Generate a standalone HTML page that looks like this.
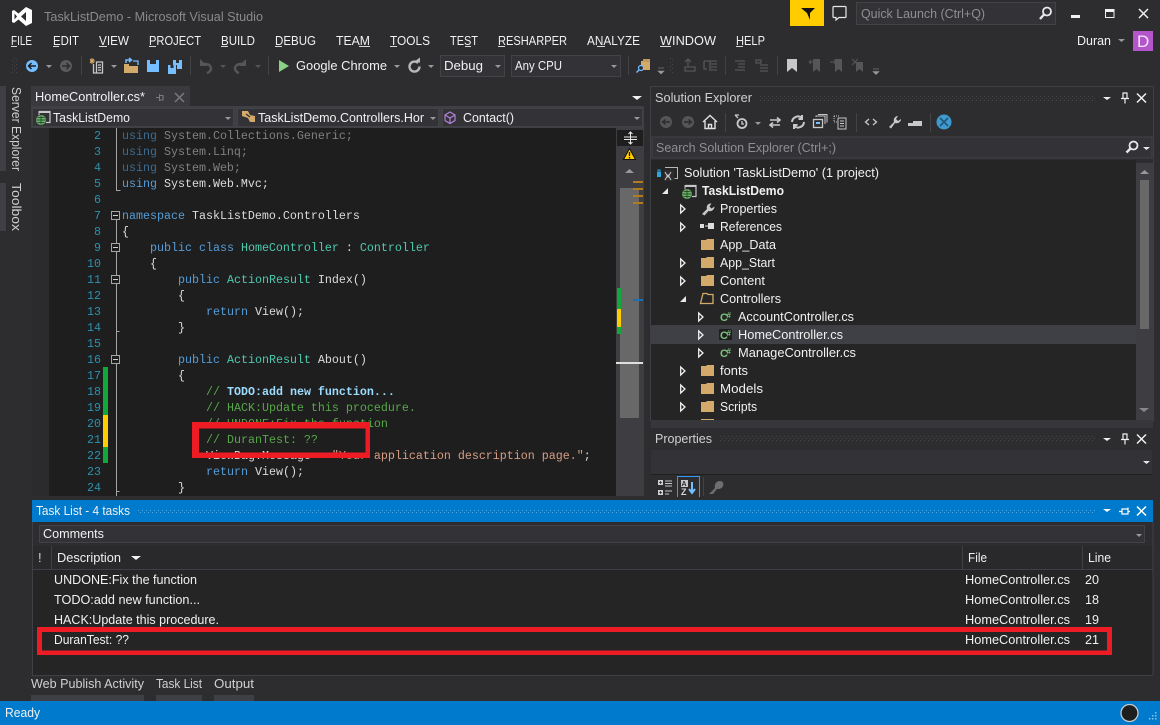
<!DOCTYPE html>
<html><head><meta charset="utf-8"><title>TaskListDemo - Microsoft Visual Studio</title>
<style>
html,body{margin:0;padding:0;background:#2d2d30;width:1160px;height:725px;overflow:hidden}
svg{display:block;position:absolute;left:0;top:0}
text{font-family:"Liberation Sans",sans-serif;font-size:13px;fill:#f1f1f1;white-space:pre}
.c text,text.c{font-family:"Liberation Mono",monospace;font-size:11.67px}
.n{fill:#2b91af;text-anchor:end}
.k{fill:#569cd6}.t{fill:#4ec9b0}.g{fill:#57a64a}.d{fill:#dcdcdc}.s{fill:#d69d85}
.dk{fill:#3d6b8f}.dd{fill:#808080}
.tri{fill:#999}
.ic{fill:none;stroke:#c8c8c8;stroke-width:1.3}
.dim{fill:none;stroke:#565656;stroke-width:1.3}
.cs{font-size:11px;font-weight:bold;fill:#7cc47c}
.cs2{font-size:8px;font-weight:bold;fill:#7cc47c}
</style></head><body>
<svg width="1160" height="725" viewBox="0 0 1160 725" xmlns="http://www.w3.org/2000/svg">
<defs>
<path id="fold" d="M0 2h5l1-1h7v11H0z" fill="#d4aa6a"/>
<path id="exp" d="M0.700 1L5 5L0.700 9z" fill="none" stroke="#f0f0f0" stroke-width="1.300"/>
<g id="ctl"><path d="M1103 -1h8l-4 3z" fill="#f1f1f1"/><path d="M1122.500 -5h5M1123 -5v5M1127 -5v5M1121 0.500h8M1125 0.500v5" fill="none" stroke="#f1f1f1" stroke-width="1.200"/><path d="M1137 -4.500l9 9M1146 -4.500l-9 9" stroke="#f1f1f1" stroke-width="1.500"/></g>
<pattern id="grip" width="4" height="4" patternUnits="userSpaceOnUse"><rect width="1" height="1" fill="#46464a"/><rect x="2" y="2" width="1" height="1" fill="#46464a"/></pattern>
<pattern id="gripb" width="4" height="4" patternUnits="userSpaceOnUse"><rect width="1" height="1" fill="#59a8e0"/><rect x="2" y="2" width="1" height="1" fill="#59a8e0"/></pattern>
<g id="proj"><path d="M3 0.500h11v11H10" fill="none" stroke="#c8c8c8" stroke-width="1.200"/><rect x="3" y="0" width="11" height="2" fill="#c8c8c8"/><path d="M3 0v4" stroke="#c8c8c8"/><circle cx="5" cy="9" r="5" fill="#6ab26a"/><path d="M0.500 9h9M5 4.500v9M1.500 6.500h7M1.500 11.500h7" stroke="#1e3a1e" stroke-width=".7"/></g>
</defs>

<rect width="1160" height="725" fill="#2d2d30"/>

<!-- Title bar -->
<path fill-rule="evenodd" d="M26 7L32 10V23L26 26L18.500 19.500L14 23L12 22V11L14 10L18.500 13.500ZM26 12L21 16.500L26 21ZM14.500 13.500V19.500L17 16.500Z" fill="#fff"/>
<text x="44" y="21" textLength="219" lengthAdjust="spacingAndGlyphs" style="fill:#8a8a8d">TaskListDemo - Microsoft Visual Studio</text>
<rect x="790" y="0" width="34" height="26" fill="#ffcc00"/>
<path d="M801 8h14l-5 5v7l-3-7z" fill="#111"/>
<path d="M833 7.500q0-1 1-1h11q1 0 1 1v9q0 1-1 1h-6l-3 2.500v-2.500h-2q-1 0-1-1z" fill="none" stroke="#e8e8e8" stroke-width="1.200"/>
<rect x="856.500" y="2.500" width="199" height="22" fill="#333337" stroke="#434346"/>
<text x="861" y="18" textLength="124" lengthAdjust="spacingAndGlyphs" style="fill:#8f8f92">Quick Launch (Ctrl+Q)</text>
<circle cx="1047" cy="11.500" r="4" fill="none" stroke="#e8e8e8" stroke-width="1.800"/><path d="M1044 14.500l-4 4.500" stroke="#e8e8e8" stroke-width="2.400"/>
<rect x="1071" y="15" width="9" height="3" fill="#f1f1f1"/>
<rect x="1105.500" y="9.500" width="8.500" height="8" fill="none" stroke="#f1f1f1"/><rect x="1105" y="9" width="9.500" height="3" fill="#f1f1f1"/>
<path d="M1139 9l9 9M1148 9l-9 9" stroke="#f1f1f1" stroke-width="1.500"/>

<!-- Menu -->
<g>
<text x="11" y="45" textLength="21" lengthAdjust="spacingAndGlyphs">FILE</text>
<text x="53" y="45" textLength="26" lengthAdjust="spacingAndGlyphs">EDIT</text>
<text x="99" y="45" textLength="30" lengthAdjust="spacingAndGlyphs">VIEW</text>
<text x="149" y="45" textLength="52" lengthAdjust="spacingAndGlyphs">PROJECT</text>
<text x="221" y="45" textLength="34" lengthAdjust="spacingAndGlyphs">BUILD</text>
<text x="275" y="45" textLength="41" lengthAdjust="spacingAndGlyphs">DEBUG</text>
<text x="336" y="45" textLength="34" lengthAdjust="spacingAndGlyphs">TEAM</text>
<text x="390" y="45" textLength="40" lengthAdjust="spacingAndGlyphs">TOOLS</text>
<text x="450" y="45" textLength="28" lengthAdjust="spacingAndGlyphs">TEST</text>
<text x="498" y="45" textLength="69" lengthAdjust="spacingAndGlyphs">RESHARPER</text>
<text x="587" y="45" textLength="53" lengthAdjust="spacingAndGlyphs">ANALYZE</text>
<text x="660" y="45" textLength="56" lengthAdjust="spacingAndGlyphs">WINDOW</text>
<text x="736" y="45" textLength="29" lengthAdjust="spacingAndGlyphs">HELP</text>
<path d="M11 46.500h6M53 46.500h6M99 46.500h8M149 46.500h7M221 46.500h7M275 46.500h7M359 46.500h11M390 46.500h7M465 46.500h6M498 46.500h7M597 46.500h8M660 46.500h11M736 46.500h7" stroke="#d8d8d8" stroke-width="1"/>
</g>
<text x="1077" y="45" textLength="34" lengthAdjust="spacingAndGlyphs">Duran</text>
<path d="M1118 39h7l-3.500 3z" class="tri"/>
<rect x="1133" y="31" width="20" height="20" fill="#b455cc"/>
<text x="1137" y="47" style="font-size:17px;fill:#f5e6f8">D</text>

<!-- Toolbar -->
<rect x="12" y="57" width="5" height="17" fill="url(#grip)"/>
<circle cx="32" cy="66" r="6" fill="#75beff"/><path d="M36 66h-7M31.500 63l-3 3 3 3" stroke="#1e1e1e" stroke-width="1.500" fill="none"/>
<path d="M46 65h6l-3 3z" class="tri"/>
<circle cx="66" cy="66" r="6" fill="#5a5a5a"/><path d="M62 66h7M66.500 63l3 3-3 3" stroke="#2d2d30" stroke-width="1.500" fill="none"/>
<path d="M81.500 56v19" stroke="#434346"/>
<path d="M93.500 64v9h5M96.500 62h6v11h-6zM98 65h3M98 67.500h3M98 70h3" class="ic" stroke-width="1.100"/>
<path d="M90 59l4 4M94 59l-4 4M92 58v6M90 61h5" stroke="#d4aa6a" stroke-width="1"/>
<path d="M111 65h6l-3 3z" class="tri"/>
<path d="M124 66h14v7h-14z" fill="#d4aa6a"/><path d="M124 64h5v3h-5z" fill="#d4aa6a"/>
<path d="M126 63v-3h5M129 58l2.500 2-2.500 2" stroke="#75beff" stroke-width="1.500" fill="none"/><path d="M133 61h5v4" fill="none" stroke="#75beff" stroke-width="1.300"/>
<path d="M147 60h12v12h-12z" fill="#75beff"/><rect x="150" y="60" width="6" height="4" fill="#2d2d30"/>
<path d="M168 65h8v9h-8z" fill="#75beff"/><path d="M173 60h9v9h-5v-4h-4z" fill="#75beff"/><rect x="176" y="60" width="3" height="3" fill="#2d2d30"/><rect x="170.500" y="65" width="3" height="3" fill="#2d2d30"/>
<path d="M190.500 56v19" stroke="#434346"/>
<path d="M201 64h4c5 0 6 3 6 4.500 0 2-2 4-4 4.500" style="fill:none;stroke:#565656;stroke-width:2.500"/><path d="M200 59v7h7z" fill="#565656"/>
<path d="M220 65h6l-3 3z" fill="#555"/>
<path d="M245 64h-4c-5 0-6 3-6 4.500 0 2 2 4 4 4.500" style="fill:none;stroke:#565656;stroke-width:2.500"/><path d="M246 59v7h-7z" fill="#565656"/>
<path d="M255 65h6l-3 3z" fill="#555"/>
<path d="M268.500 56v19" stroke="#434346"/>
<path d="M279 60l10 6-10 6z" fill="#89d185"/>
<text x="296" y="70" textLength="91" lengthAdjust="spacingAndGlyphs">Google Chrome</text>
<path d="M394 65h6l-3 3z" class="tri"/>
<path d="M418 63a5 5 0 1 0 1.500 3.500" fill="none" stroke="#b8b8b8" stroke-width="2.400"/><path d="M413 62.500h7v-5z" fill="#b8b8b8"/>
<path d="M428 65h6l-3 3z" class="tri"/>
<rect x="440.500" y="55.500" width="64" height="21" fill="#333337" stroke="#434346"/>
<text x="444" y="70" textLength="39" lengthAdjust="spacingAndGlyphs">Debug</text>
<path d="M495 65h6l-3 3z" class="tri"/>
<rect x="511.500" y="55.500" width="109" height="21" fill="#333337" stroke="#434346"/>
<text x="515" y="70" textLength="47" lengthAdjust="spacingAndGlyphs">Any CPU</text>
<path d="M611 65h6l-3 3z" class="tri"/>
<path d="M628.500 56v19" stroke="#434346"/>
<path d="M641 61h9v9h-9z" fill="#d4aa6a"/><path d="M643 59h7v3h-7z" fill="#c09a5f"/>
<circle cx="641" cy="68" r="2.500" fill="#2d2d30" stroke="#75beff" stroke-width="1.200"/><path d="M639 70l-2.500 2.500" stroke="#75beff" stroke-width="1.400"/>
<path d="M658 68h6M658 71h6l-3 3z" fill="#999" stroke="#999" stroke-width=".6"/>
<rect x="669" y="57" width="5" height="17" fill="url(#grip)"/>
<g class="dim"><path d="M685 67v4h10v-4zM685 62l3-3 3 3M688 60v6"/><path d="M704 61h6v10M704 61v8h3M710 61h7M711 64h6M711 67h6M711 70h6"/><path d="M735 61h10M738 64h7M738 67h7M735 70h10M756 60h5v3h-5zM760 65h8M760 68h8M760 71h8"/></g>
<path d="M725.500 56v19M777.500 56v19" stroke="#434346"/>
<path d="M787 59h10v13l-5-4-5 4z" fill="#c8c8c8"/>
<path d="M813 59h7v13l-3.500-3-3.500 3z" fill="#565656"/><path d="M809 62h6M809 62l2-2M809 62l2 2" stroke="#565656" fill="none"/>
<path d="M835 59h7v13l-3.500-3-3.500 3z" fill="#565656"/><path d="M830 62h6M836 62l-2-2M836 62l-2 2" stroke="#565656" fill="none"/>
<path d="M856 62h7v10l-3.500-3-3.500 3z" fill="#565656"/><path d="M852 59l6 6M858 59l-6 6" stroke="#565656"/>
<path d="M873 69h6M873 71.500h6l-3 3z" fill="#999" stroke="#999" stroke-width=".6"/>

<!-- Left tabs -->
<rect x="0" y="86" width="6" height="85" fill="#3f3f46"/>
<rect x="0" y="183" width="6" height="48" fill="#3f3f46"/>
<text transform="translate(12,87) rotate(90)" textLength="84" lengthAdjust="spacingAndGlyphs" style="fill:#d0d0d0">Server Explorer</text>
<text transform="translate(12,183) rotate(90)" textLength="48" lengthAdjust="spacingAndGlyphs" style="fill:#d0d0d0">Toolbox</text>

<!-- Doc tab -->
<rect x="31" y="86" width="159" height="20" fill="#3a3a3e"/>
<rect x="31" y="106" width="613" height="22" fill="#3f3f46"/>
<text x="35" y="101" textLength="110" lengthAdjust="spacingAndGlyphs">HomeController.cs*</text>
<path d="M156 97.500h3M159.500 95.500h3.500v4.500h-3.500zM163 97.500h1M159.500 94v7" stroke="#7a7a7a" fill="none" stroke-width="1"/>
<path d="M175 93l9 9M184 93l-9 9" stroke="#7a7a7a" stroke-width="1.500"/>
<path d="M632 96h10l-5 4z" fill="#f1f1f1"/>

<rect x="32.500" y="108.500" width="201" height="18" fill="#333337" stroke="#434346"/>
<rect x="237.500" y="108.500" width="201" height="18" fill="#333337" stroke="#434346"/>
<rect x="442.500" y="108.500" width="200" height="18" fill="#333337" stroke="#434346"/>
<use href="#proj" x="36" y="111"/>
<text x="53" y="122" textLength="77" lengthAdjust="spacingAndGlyphs">TaskListDemo</text>
<path d="M225 117h6l-3 3z" class="tri"/>
<path d="M242 111l6 0 2 4 5 1 0 6-5 0-2-4-6-2z" fill="#d4aa6a"/><path d="M246 114l4 3" stroke="#2d2d30" stroke-width="1.200"/>
<text x="258" y="122" textLength="166" lengthAdjust="spacingAndGlyphs">TaskListDemo.Controllers.Hor</text>
<path d="M430 117h6l-3 3z" class="tri"/>
<path d="M450 112l5 3v5.500l-5 3-5-3V115zM445 115l5 3 5-3M450 118v5.500" fill="none" stroke="#b180d7" stroke-width="1.200"/>
<text x="463" y="122" textLength="51" lengthAdjust="spacingAndGlyphs">Contact()</text>
<path d="M634 117h6l-3 3z" class="tri"/>

<!-- Editor -->
<rect x="32" y="128" width="584" height="368" fill="#1e1e1e"/>
<rect x="32" y="128" width="17" height="368" fill="#2b2b2d"/>
<g class="c">
<text class="n" x="101" y="139">2</text><text class="n" x="101" y="155">3</text><text class="n" x="101" y="171">4</text><text class="n" x="101" y="187">5</text><text class="n" x="101" y="203">6</text><text class="n" x="101" y="219">7</text><text class="n" x="101" y="235">8</text><text class="n" x="101" y="251">9</text><text class="n" x="101" y="267">10</text><text class="n" x="101" y="283">11</text><text class="n" x="101" y="299">12</text><text class="n" x="101" y="315">13</text><text class="n" x="101" y="331">14</text><text class="n" x="101" y="347">15</text><text class="n" x="101" y="363">16</text><text class="n" x="101" y="379">17</text><text class="n" x="101" y="395">18</text><text class="n" x="101" y="411">19</text><text class="n" x="101" y="427">20</text><text class="n" x="101" y="443">21</text><text class="n" x="101" y="459">22</text><text class="n" x="101" y="475">23</text><text class="n" x="101" y="491">24</text>
<text x="122" y="139"><tspan class="dk">using</tspan><tspan class="dd"> System.Collections.Generic;</tspan></text>
<text x="122" y="155"><tspan class="dk">using</tspan><tspan class="dd"> System.Linq;</tspan></text>
<text x="122" y="171"><tspan class="dk">using</tspan><tspan class="dd"> System.Web;</tspan></text>
<text x="122" y="187"><tspan class="k">using</tspan><tspan class="d"> System.Web.Mvc;</tspan></text>
<text x="122" y="219"><tspan class="k">namespace</tspan><tspan class="d"> TaskListDemo.Controllers</tspan></text>
<text x="122" y="235" class="d c">{</text>
<text x="150" y="251"><tspan class="k">public class</tspan><tspan class="d"> </tspan><tspan class="t">HomeController</tspan><tspan class="d"> : </tspan><tspan class="t">Controller</tspan></text>
<text x="150" y="267" class="d c">{</text>
<text x="178" y="283"><tspan class="k">public</tspan><tspan class="d"> </tspan><tspan class="t">ActionResult</tspan><tspan class="d"> Index()</tspan></text>
<text x="178" y="299" class="d c">{</text>
<text x="206" y="315"><tspan class="k">return</tspan><tspan class="d"> View();</tspan></text>
<text x="178" y="331" class="d c">}</text>
<text x="178" y="363"><tspan class="k">public</tspan><tspan class="d"> </tspan><tspan class="t">ActionResult</tspan><tspan class="d"> About()</tspan></text>
<text x="178" y="379" class="d c">{</text>
<text x="206" y="395"><tspan class="g">// </tspan><tspan style="fill:#9cdcfe;font-weight:bold">TODO:add new function...</tspan></text>
<text x="206" y="411" class="g c">// HACK:Update this procedure.</text>
<text x="206" y="427" class="g c">// UNDONE:Fix the function</text>
<text x="206" y="443" class="g c">// DuranTest: ??</text>
<text x="206" y="459"><tspan class="d">ViewBag.Message = </tspan><tspan class="s">"Your application description page."</tspan><tspan class="d">;</tspan></text>
<text x="206" y="475"><tspan class="k">return</tspan><tspan class="d"> View();</tspan></text>
<text x="178" y="491" class="d c">}</text>
</g>
<!-- outlining -->
<path d="M116.500 128v62.500h4M116.500 220v276" stroke="#a5a5a5" stroke-width="1" fill="none"/>
<g fill="#1e1e1e" stroke="#a5a5a5"><rect x="111.500" y="211.500" width="8" height="8"/><rect x="111.500" y="243.500" width="8" height="8"/><rect x="111.500" y="275.500" width="8" height="8"/><rect x="111.500" y="355.500" width="8" height="8"/></g>
<path d="M113 215.500h5M113 247.500h5M113 279.500h5M113 359.500h5" stroke="#d0d0d0"/>
<path d="M116.500 331.500h3M116.500 491.500h3" stroke="#a5a5a5"/>
<!-- change margin -->
<rect x="103" y="367" width="5" height="48" fill="#10a838"/>
<rect x="103" y="415" width="5" height="32" fill="#ffcc00"/>
<rect x="103" y="447" width="5" height="16" fill="#10a838"/>

<!-- editor scrollbar -->
<rect x="616" y="128" width="28" height="368" fill="#3e3e42"/>
<rect x="617" y="130" width="26" height="16" fill="#1e1e1e"/>
<path d="M624 137h13M624 139.500h13M630.500 132v12M628.500 134l2-2 2 2M628.500 142l2 2 2-2" stroke="#e8e8e8" stroke-width="1" fill="none"/>
<path d="M629.500 148.500l6 11h-12z" fill="#ffcc00" stroke="#111" stroke-width="1"/><path d="M629.500 152v4M629.500 157v1.500" stroke="#111" stroke-width="1.300"/>
<path d="M625 173l4.500-4 4.500 4z" fill="#999"/>
<rect x="620" y="188" width="19" height="230" fill="#686868"/>
<g fill="#b27c1c"><rect x="633" y="181" width="10" height="2"/><rect x="633" y="188" width="10" height="2"/><rect x="633" y="195" width="10" height="2"/><rect x="633" y="202" width="10" height="2"/></g>
<rect x="633" y="299" width="10" height="2" fill="#1a6fb5"/>
<rect x="617" y="288" width="4" height="21" fill="#10a838"/>
<rect x="617" y="309" width="4" height="18" fill="#ffcc00"/>
<rect x="617" y="327" width="4" height="7" fill="#10a838"/>
<rect x="616" y="362" width="27" height="2" fill="#e0e0e0"/>

<!-- Solution Explorer -->
<rect x="650.500" y="86.500" width="503" height="334" fill="none" stroke="#3f3f46"/>
<text x="655" y="102" textLength="97" lengthAdjust="spacingAndGlyphs" style="fill:#d0d0d0">Solution Explorer</text>
<rect x="760" y="96" width="335" height="5" fill="url(#grip)"/>
<use href="#ctl" y="98"/>
<circle cx="666" cy="122" r="6" fill="#555"/><path d="M670 122h-7M665.500 119.500l-3 2.500 3 2.500" stroke="#2d2d30" stroke-width="1.400" fill="none"/>
<circle cx="688" cy="122" r="6" fill="#555"/><path d="M684 122h7M688.500 119.500l3 2.500-3 2.500" stroke="#2d2d30" stroke-width="1.400" fill="none"/>
<path d="M703 122l7-6.500 7 6.500M705 121v7.500h10V121M708.500 128.500v-4h3v4" class="ic" style="stroke-width:1.400;stroke:#e0e0e0"/>
<path d="M725.500 113v19" stroke="#434346"/>
<circle cx="742" cy="123.500" r="4.500" class="ic" style="stroke-width:1.800"/><path d="M742 121v3h2M735 115l3 3M735 115h4" class="ic"/>
<path d="M755 122h6l-3 3z" class="tri"/>
<path d="M770 120h10M777 117.500l3 2.500-3 2.500M780 125h-10M773 122.500l-3 2.500 3 2.500" class="ic" style="stroke-width:1.600"/>
<path d="M792 122a6 6 0 0 1 10-4M804 122a6 6 0 0 1-10 4M802 115v4h-3.500M794 129v-4h3.500" class="ic" style="stroke-width:2"/>
<rect x="813.500" y="119.500" width="9" height="8" class="ic"/><path d="M816 117v-1h9v8M818 114.500h9v8" class="ic" style="stroke-width:1"/><rect x="816" y="122" width="4" height="2" fill="#75beff"/>
<path d="M838 118h7M840 118h6v11h-8v-11M840 121h4M840 123.500h4M840 126h4" class="ic" style="stroke-width:1"/><path d="M834 116h6M834 116v6h3" stroke="#c8c8c8" stroke-dasharray="1 1" fill="none"/>
<path d="M856.500 113v19" stroke="#434346"/>
<path d="M869 119l-3.500 3 3.500 3M873 119l3.500 3-3.500 3" class="ic"/>
<path d="M889 127l5-5c-1-3 1-6 4-6l-2 3 2 2 3-2c0 3-3 5-6 4l-4 5.500z" fill="#c8c8c8"/>
<path d="M908 123h5v-2h9v5h-14z" fill="#c8c8c8"/>
<path d="M930.500 113v19" stroke="#434346"/>
<circle cx="944" cy="122" r="7.500" fill="#3f9ad0"/><path d="M940 118l8 8M948 118l-8 8" stroke="#24577a" stroke-width="1.800"/>
<rect x="652" y="137" width="500" height="21" fill="#333337" stroke="#434346"/>
<text x="656" y="152" textLength="180" lengthAdjust="spacingAndGlyphs" style="fill:#8f8f92">Search Solution Explorer (Ctrl+;)</text>
<circle cx="1133.500" cy="145.500" r="4" fill="none" stroke="#e8e8e8" stroke-width="1.800"/><path d="M1130.500 148.500l-4 4" stroke="#e8e8e8" stroke-width="2.400"/>
<path d="M1143 147h7l-3.500 3z" fill="#e8e8e8"/>

<rect x="651" y="160" width="485" height="260" fill="#252526"/>
<rect x="1136" y="163" width="17" height="257" fill="#3e3e42"/>
<path d="M1140 174l4.500-4 4.500 4z" fill="#999"/>
<rect x="1140" y="180" width="9" height="149" fill="#686868"/>
<path d="M1139 408l5 4 5-4z" fill="#888"/>
<rect x="651" y="325" width="485" height="19" fill="#3f3f46"/>

<g>
<rect x="657" y="172" width="4" height="5" fill="#29a8e0"/><path d="M658 172v-2h2v2" fill="none" stroke="#29a8e0"/>
<path d="M665 167.500h12.500v11h-3" fill="none" stroke="#b8b8b8"/><rect x="664" y="170" width="10" height="11" fill="#2d2d30"/><path d="M665 172l3 5 3-5M665 180l3-5 3 5" stroke="#c8c8c8" fill="none"/>
<text x="684" y="177" textLength="195" lengthAdjust="spacingAndGlyphs">Solution 'TaskListDemo' (1 project)</text>
<path d="M662 194l6-6v6z" fill="#e8e8e8"/>
<use href="#proj" x="682" y="185"/>
<text x="702" y="195" textLength="82" lengthAdjust="spacingAndGlyphs" style="font-weight:bold">TaskListDemo</text>
<use href="#exp" x="680" y="204"/><path d="M702 214l5-5c-1-3 1-6 4.500-5.500l-2 3 2 2 3-2c0 3-3 5.500-6 4.500l-4 4.500z" fill="#c8c8c8"/>
<text x="720" y="213" textLength="57" lengthAdjust="spacingAndGlyphs">Properties</text>
<use href="#exp" x="680" y="222"/><rect x="700" y="224" width="4" height="4" fill="#ddd"/><path d="M705 226h3" stroke="#ddd"/><rect x="708" y="223" width="6" height="6" fill="#ddd"/>
<text x="720" y="231" textLength="62" lengthAdjust="spacingAndGlyphs">References</text>
<use href="#fold" x="701" y="238"/><text x="720" y="249" textLength="56" lengthAdjust="spacingAndGlyphs">App_Data</text>
<use href="#exp" x="680" y="258"/><use href="#fold" x="701" y="256"/><text x="720" y="267" textLength="55" lengthAdjust="spacingAndGlyphs">App_Start</text>
<use href="#exp" x="680" y="276"/><use href="#fold" x="701" y="274"/><text x="720" y="285" textLength="45" lengthAdjust="spacingAndGlyphs">Content</text>
<path d="M680 302l6-6v6z" fill="#e8e8e8"/>
<path d="M703 293.500h4l1 1h5v9h-12.500l1.500-6z" fill="#252526" stroke="#d4aa6a" stroke-width="1.300"/>
<text x="720" y="303" textLength="61" lengthAdjust="spacingAndGlyphs">Controllers</text>
<use href="#exp" x="698" y="312"/><text x="720" y="321" class="cs">C</text><text x="726.500" y="318" class="cs2">#</text>
<text x="738" y="321" textLength="116" lengthAdjust="spacingAndGlyphs">AccountController.cs</text>
<use href="#exp" x="698" y="330"/><rect x="719" y="329" width="13" height="11" fill="#1e1e1e" rx="1"/><text x="720" y="339" class="cs">C</text><text x="726.500" y="336" class="cs2">#</text>
<text x="738" y="339" textLength="105" lengthAdjust="spacingAndGlyphs">HomeController.cs</text>
<use href="#exp" x="698" y="348"/><text x="720" y="357" class="cs">C</text><text x="726.500" y="354" class="cs2">#</text>
<text x="738" y="357" textLength="118" lengthAdjust="spacingAndGlyphs">ManageController.cs</text>
<use href="#exp" x="680" y="366"/><use href="#fold" x="701" y="364"/><text x="720" y="375" textLength="28" lengthAdjust="spacingAndGlyphs">fonts</text>
<use href="#exp" x="680" y="384"/><use href="#fold" x="701" y="382"/><text x="720" y="393" textLength="43" lengthAdjust="spacingAndGlyphs">Models</text>
<use href="#exp" x="680" y="402"/><use href="#fold" x="701" y="400"/><text x="720" y="411" textLength="37" lengthAdjust="spacingAndGlyphs">Scripts</text>
<rect x="701" y="419" width="13" height="1" fill="#d4aa6a"/>
</g>

<!-- Properties -->
<rect x="651" y="420" width="502" height="8" fill="#37373b"/>
<text x="655" y="443" textLength="57" lengthAdjust="spacingAndGlyphs" style="fill:#d0d0d0">Properties</text>
<rect x="720" y="436" width="375" height="5" fill="url(#grip)"/>
<use href="#ctl" y="439"/>
<rect x="651" y="450" width="501" height="24" fill="#333337"/>
<path d="M1143 461h7l-3.500 3z" fill="#e8e8e8"/>
<path d="M651 474.500h501" stroke="#1f1f1f"/>
<rect x="658" y="480" width="5" height="5" fill="#d0d0d0"/><rect x="658" y="490" width="5" height="5" fill="#d0d0d0"/>
<path d="M659 482.500h3M660.500 481v3M659 492.500h3M660.500 491v3" stroke="#2d2d30" stroke-width=".8"/>
<path d="M665 481h7M665 483.500h7M665 486h7M665 491h7M665 494h4" stroke="#c8c8c8" fill="none"/>
<path d="M677.500 497v-20.500h22V497" fill="#2d2d30" stroke="#3399ff"/>
<rect x="681" y="480" width="7" height="7" fill="#c8c8c8"/>
<text x="681.500" y="486" style="font-size:7px;font-weight:bold;fill:#2d2d30">A</text>
<text x="681" y="495" style="font-size:9px;font-weight:bold;fill:#d8d8d8">Z</text>
<path d="M692 482v10M689 489l3 4 3-4" stroke="#75beff" stroke-width="2" fill="none"/>
<path d="M703.500 477v19" stroke="#434346"/>
<path d="M709 494l6-6c-1-3 1-7 5-7 3 0 4 3 3 5-1 3-4 3-6 3l-4 5z" fill="#6e6e6e"/>

<!-- Task list -->
<rect x="32" y="522" width="1121" height="153" fill="#2d2d30"/>
<rect x="32" y="500" width="1121" height="22" fill="#007acc"/>
<text x="36" y="515" textLength="94" lengthAdjust="spacingAndGlyphs">Task List - 4 tasks</text>
<rect x="138" y="509" width="957" height="5" fill="url(#gripb)"/>
<path d="M1103 509h8l-4 3z" fill="#fff"/>
<path d="M1119 511.500h3M1122 509h6v5h-6zM1128 507.500v7M1128 511.500h2" stroke="#fff" fill="none" stroke-width="1.200"/>
<path d="M1137 506.500l9 9M1146 506.500l-9 9" stroke="#fff" stroke-width="1.500"/>
<rect x="39.500" y="525.500" width="1105" height="17" fill="#333337" stroke="#434346"/>
<text x="43" y="538" textLength="61" lengthAdjust="spacingAndGlyphs">Comments</text>
<path d="M1136 534h6l-3 3z" class="tri"/>
<rect x="32" y="546" width="1121" height="129" fill="#252526"/>
<rect x="32" y="546" width="1121" height="23" fill="#29292b"/>
<path d="M32 569.500h1121M51.500 546v23M962.500 546v23M1082.500 546v23" stroke="#3f3f46"/>
<path d="M32.500 522v153.500H1153M1153 522v153" stroke="#3f3f46" fill="none"/>
<text x="38" y="562" style="fill:#d0d0d0">!</text>
<text x="57" y="562" textLength="64" lengthAdjust="spacingAndGlyphs">Description</text>
<path d="M131 556h10l-5 4z" fill="#f1f1f1"/>
<text x="968" y="562" textLength="19" lengthAdjust="spacingAndGlyphs">File</text>
<text x="1088" y="562" textLength="23" lengthAdjust="spacingAndGlyphs">Line</text>
<text x="54" y="584" textLength="143" lengthAdjust="spacingAndGlyphs">UNDONE:Fix the function</text>
<text x="54" y="604" textLength="146" lengthAdjust="spacingAndGlyphs">TODO:add new function...</text>
<text x="54" y="624" textLength="165" lengthAdjust="spacingAndGlyphs">HACK:Update this procedure.</text>
<text x="54" y="644" textLength="75" lengthAdjust="spacingAndGlyphs">DuranTest: ??</text>
<text x="965" y="584" textLength="105" lengthAdjust="spacingAndGlyphs">HomeController.cs</text><text x="1085" y="584" textLength="14" lengthAdjust="spacingAndGlyphs">20</text>
<text x="965" y="604" textLength="105" lengthAdjust="spacingAndGlyphs">HomeController.cs</text><text x="1085" y="604" textLength="14" lengthAdjust="spacingAndGlyphs">18</text>
<text x="965" y="624" textLength="105" lengthAdjust="spacingAndGlyphs">HomeController.cs</text><text x="1085" y="624" textLength="14" lengthAdjust="spacingAndGlyphs">19</text>
<text x="965" y="644" textLength="105" lengthAdjust="spacingAndGlyphs">HomeController.cs</text><text x="1085" y="644" textLength="14" lengthAdjust="spacingAndGlyphs">21</text>

<!-- Red annotations -->
<path fill-rule="evenodd" fill="#ed1c24" d="M192 422H370V458H192ZM199 428.500H365.500V452.500H199Z"/>
<path fill-rule="evenodd" fill="#ed1c24" d="M37 627H1112V655H37ZM42 632H1107V650.500H42Z"/>

<!-- Bottom tabs -->
<text x="31" y="688" textLength="113" lengthAdjust="spacingAndGlyphs" style="fill:#d0d0d0">Web Publish Activity</text>
<text x="156" y="688" textLength="46" lengthAdjust="spacingAndGlyphs" style="fill:#d0d0d0">Task List</text>
<text x="214" y="688" textLength="40" lengthAdjust="spacingAndGlyphs" style="fill:#d0d0d0">Output</text>
<rect x="31" y="695" width="113" height="6" fill="#3f3f46"/>
<rect x="156" y="695" width="46" height="6" fill="#3f3f46"/>
<rect x="214" y="695" width="40" height="6" fill="#3f3f46"/>

<!-- Status bar -->
<rect x="0" y="701" width="1160" height="24" fill="#007acc"/>
<text x="5" y="717" textLength="35" lengthAdjust="spacingAndGlyphs">Ready</text>
<circle cx="1129.500" cy="713" r="8.500" fill="#1e1e1e" stroke="#c8c8c8" stroke-width="1.300"/>
<g fill="#8cc4e8"><rect x="1155" y="712" width="1.500" height="1.500"/><rect x="1152" y="715" width="1.500" height="1.500"/><rect x="1155" y="715" width="1.500" height="1.500"/><rect x="1149" y="718" width="1.500" height="1.500"/><rect x="1152" y="718" width="1.500" height="1.500"/><rect x="1155" y="718" width="1.500" height="1.500"/></g>
</svg>
</body></html>
